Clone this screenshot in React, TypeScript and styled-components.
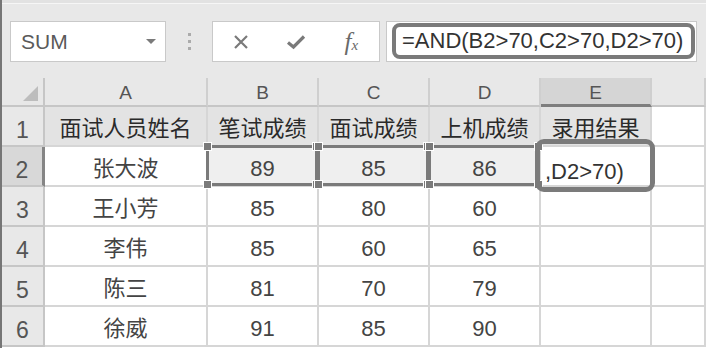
import styled, { createGlobalStyle, css } from "styled-components";

const GlobalStyle = createGlobalStyle`
  html, body {
    margin: 0;
    padding: 0;
    background: #fff;
    overflow: hidden;
  }
  body {
    font-family: "Liberation Sans", "Noto Sans CJK SC", sans-serif;
  }
`;

const COLS = ["A", "B", "C", "D", "E", ""];
const HEAD = ["面试人员姓名", "笔试成绩", "面试成绩", "上机成绩", "录用结果"];
const ROWS = [
  ["张大波", "89", "85", "86"],
  ["王小芳", "85", "80", "60"],
  ["李伟", "85", "60", "65"],
  ["陈三", "81", "70", "79"],
  ["徐威", "91", "85", "90"],
];

const App = () => (
  <>
    <GlobalStyle />
    <Frame>
      <FormulaBar>
        <NameBox>
          <span>SUM</span>
          <Caret />
        </NameBox>
        <Grip>
          <i />
          <i />
          <i />
        </Grip>
        <ToolBox>
          <ToolIcon>
            <svg width="18" height="16" viewBox="0 0 18 16">
              <path d="M3 2 L15 14 M15 2 L3 14" stroke="#7a7a7a" strokeWidth="2.2" fill="none" />
            </svg>
          </ToolIcon>
          <ToolIcon>
            <svg width="20" height="16" viewBox="0 0 20 16">
              <path d="M2 8.5 L7.5 13 L18 2.5" stroke="#7a7a7a" strokeWidth="3.2" fill="none" />
            </svg>
          </ToolIcon>
          <Fx>
            f<sub>x</sub>
          </Fx>
        </ToolBox>
        <FormulaInput>
          <FormulaMark>=AND(B2&gt;70,C2&gt;70,D2&gt;70)</FormulaMark>
        </FormulaInput>
      </FormulaBar>

      <Sheet>
        <Corner>
          <CornerMark />
        </Corner>
        {COLS.map((c, i) => (
          <ColHead key={i} $active={c === "E"}>
            {c}
          </ColHead>
        ))}

        <RowHead>1</RowHead>
        {HEAD.map((h) => (
          <Cell key={h} $head>
            {h}
          </Cell>
        ))}
        <Cell />

        {ROWS.map((r, ri) => (
          <Row key={ri} data={r} index={ri + 2} />
        ))}
      </Sheet>
    </Frame>
  </>
);

const Row: React.FC<{ data: string[]; index: number }> = ({ data, index }) => {
  const editing = index === 2;
  return (
    <>
      <RowHead $active={editing}>{index}</RowHead>
      {data.map((v, i) => (
        <Cell key={i} $ref={editing && i > 0}>
          {v}
          {editing && i > 0 && (
            <RefBox>
              <Handle $x="left" $y="top" />
              <Handle $x="left" $y="bottom" />
              <Handle $x="right" $y="top" />
              <Handle $x="right" $y="bottom" />
            </RefBox>
          )}
        </Cell>
      ))}
      {editing ? (
        <EditCell>
          ,D2&gt;70)
          <CellMark />
        </EditCell>
      ) : (
        <Cell />
      )}
      <Cell />
    </>
  );
};

export default App;

const Frame = styled.div`
  width: 706px;
  height: 348px;
  box-sizing: border-box;
  border-left: 2px solid #767676;
  display: flex;
  flex-direction: column;
  overflow: hidden;
`;

const FormulaBar = styled.div`
  height: 78px;
  box-sizing: border-box;
  padding-top: 21px;
  display: flex;
  align-items: flex-start;
  background: linear-gradient(#e2e2e2 0 3px, #f6f6f6 3px 4px, #e8e8e8 4px);
`;

const boxBase = css`
  height: 41px;
  box-sizing: border-box;
  background: #fff;
  border: 1px solid #c9c9c9;
`;

const NameBox = styled.div`
  ${boxBase};
  margin-left: 8px;
  width: 156px;
  display: flex;
  align-items: center;
  justify-content: space-between;
  padding: 0 9px 0 10px;
  font-size: 21px;
  color: #5a5a5a;
`;

const Caret = styled.span`
  width: 0;
  height: 0;
  border-left: 5px solid transparent;
  border-right: 5px solid transparent;
  border-top: 5px solid #7a7a7a;
`;

const Grip = styled.div`
  width: 46px;
  height: 41px;
  display: flex;
  flex-direction: column;
  align-items: center;
  justify-content: center;
  gap: 4px;

  i {
    width: 3px;
    height: 3px;
    background: #ababab;
  }
`;

const ToolBox = styled.div`
  ${boxBase};
  width: 168px;
  display: flex;
  align-items: center;
  justify-content: space-around;
`;

const ToolIcon = styled.span`
  width: 20px;
  display: flex;
  justify-content: center;
  align-items: center;
`;

const Fx = styled.span`
  width: 20px;
  font-family: "Liberation Serif", serif;
  font-style: italic;
  font-size: 25px;
  line-height: 1;
  color: #6a6a6a;
  text-align: center;

  sub {
    font-size: 15px;
    vertical-align: 0;
  }
`;

const FormulaInput = styled.div`
  ${boxBase};
  margin-left: 6px;
  width: 311px;
  padding: 1px 1px 2px 5px;
  display: flex;
`;

const FormulaMark = styled.div`
  flex: 1;
  border: 4px solid #7a7a7a;
  border-radius: 8px;
  padding-left: 6px;
  display: flex;
  align-items: center;
  font-size: 22px;
  color: #333;
  white-space: nowrap;
`;

const Sheet = styled.div`
  display: grid;
  grid-template-columns: 43px 163px repeat(4, 111px) 1fr;
  grid-template-rows: 29px repeat(6, 40px);
  background: #fff;
`;

const Corner = styled.div`
  background: #e8e8e8;
  border-right: 2px solid #c6c6c6;
  border-bottom: 2px solid #c6c6c6;
  position: relative;
`;

const CornerMark = styled.span`
  position: absolute;
  right: 5px;
  bottom: 4px;
  width: 0;
  height: 0;
  border-left: 15px solid transparent;
  border-bottom: 15px solid #bdbdbd;
`;

const ColHead = styled.div<{ $active?: boolean }>`
  box-sizing: border-box;
  padding-top: 3px;
  display: flex;
  align-items: center;
  justify-content: center;
  font-size: 19px;
  color: #555;
  background: ${(p) => (p.$active ? "#d5d5d5" : "#e8e8e8")};
  border-right: 2px solid #cfcfcf;
  border-bottom: ${(p) => (p.$active ? "3px solid #7e7e7e" : "2px solid #c6c6c6")};
`;

const RowHead = styled.div<{ $active?: boolean }>`
  box-sizing: border-box;
  display: flex;
  align-items: flex-end;
  justify-content: center;
  padding-bottom: 3px;
  font-size: 23px;
  line-height: 1;
  color: #555;
  background: ${(p) => (p.$active ? "#d8d8d8" : "#e8e8e8")};
  border-bottom: 2px solid #c6c6c6;
  border-right: ${(p) => (p.$active ? "3px solid #858585" : "2px solid #c6c6c6")};
`;

const Cell = styled.div<{ $head?: boolean; $ref?: boolean }>`
  position: relative;
  box-sizing: border-box;
  display: flex;
  align-items: flex-end;
  justify-content: center;
  padding-bottom: 3px;
  font-size: 22px;
  line-height: 1.25;
  color: ${(p) => (p.$head ? "#2a2a2a" : "#444")};
  background: ${(p) => (p.$head ? "#e3e3e3" : p.$ref ? "#efefef" : "#fff")};
  border-right: 2px solid #d6d6d6;
  border-bottom: 2px solid #d6d6d6;
  white-space: nowrap;
`;

const EditCell = styled(Cell)`
  justify-content: flex-start;
  padding-left: 4px;
  padding-bottom: 0;
  color: #333;
`;

const RefBox = styled.span`
  position: absolute;
  top: -2px;
  left: -2px;
  right: -1px;
  bottom: -1px;
  border: 3px solid #7a7a7a;
  pointer-events: none;
`;

const Handle = styled.span<{ $x: "left" | "right"; $y: "top" | "bottom" }>`
  position: absolute;
  width: 7px;
  height: 7px;
  background: #7a7a7a;
  outline: 1px solid #fff;
  ${(p) => p.$x}: -5px;
  ${(p) => p.$y}: -5px;
  z-index: 1;
`;

const CellMark = styled.span`
  position: absolute;
  top: -8px;
  left: -6px;
  right: -5px;
  bottom: -7px;
  border: 5px solid #7b7b7b;
  border-radius: 9px;
  z-index: 2;
`;
